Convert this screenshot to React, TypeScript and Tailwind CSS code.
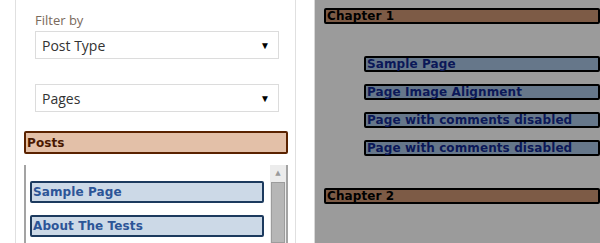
const chapterPages = [
  "Sample Page",
  "Page Image Alignment",
  "Page with comments disabled",
  "Page with comments disabled",
];

const posts = ["Sample Page", "About The Tests"];

const Select = ({ label }: { label: string }) => (
  <div className="flex h-[28px] w-[244px] items-center justify-between border border-[#dcdcdc] bg-white pl-[6px] pr-[8px] text-[14px] text-[#333] [font-family:'Open_Sans',sans-serif]">
    <span>{label}</span>
    <span className="text-[10px] text-black">▼</span>
  </div>
);

const App = () => {
  return (
    <main className="flex h-[243px] w-[600px] overflow-hidden bg-white [font-family:'DejaVu_Sans',Verdana,sans-serif]">
      <section className="ml-[15px] flex h-full w-[281px] flex-col border-x border-[#e0e0e0] px-[8px]">
        <div className="flex flex-col pl-[11px] pt-[11px]">
          <span className="text-[13px] leading-[18px] text-[#7a6a5c] [font-family:'Open_Sans',sans-serif]">
            Filter by
          </span>
          <div className="mt-[2px]">
            <Select label="Post Type" />
          </div>
          <div className="mt-[25px]">
            <Select label="Pages" />
          </div>
        </div>
        <div className="mt-[19px] flex h-[23px] w-[264px] items-center rounded-[2px] border-2 border-[#5a2200] bg-[#e3c0a8] pl-[1px] text-[12px] font-bold tracking-[0.1px] text-[#4a1800]">
          Posts
        </div>
        <div className="mt-[11px] flex w-[264px] flex-1 border-x-2 border-[#a3a3a3]">
          <div className="flex flex-1 flex-col gap-[12px] pl-[4px] pt-[16px]">
            {posts.map((p) => (
              <div
                key={p}
                className="flex h-[22px] w-[234px] items-center rounded-[2px] border-2 border-[#1c3a5e] bg-[#ccd9e7] pl-[1px] text-[12px] font-bold tracking-[0.1px] text-[#2c5597]"
              >
                {p}
              </div>
            ))}
          </div>
          <div className="flex w-[16px] flex-col bg-[#ececec]">
            <div className="flex h-[17px] items-center justify-center text-[7px] text-[#9a9a9a]">
              ▲
            </div>
            <div className="mx-[1px] flex-1 border border-[#9c9c9c] bg-[#b6b6b6]" />
          </div>
        </div>
      </section>
      <section className="ml-[18px] flex flex-1 flex-col border-l border-[#d8d8d8] bg-[#9b9b9b] pl-[9px] pt-[8px]">
        <div className="flex h-[16px] items-center rounded-[2px] border-2 border-black bg-[#7d5b46] pl-[1px] text-[12px] font-bold leading-[12px] tracking-[0.1px] text-black">
          Chapter 1
        </div>
        <div className="mt-[32px] flex flex-col gap-[12px] pl-[40px]">
          {chapterPages.map((p, i) => (
            <div
              key={i}
              className="flex h-[16px] items-center rounded-[2px] border-2 border-black bg-[#66778a] pl-[1px] text-[12px] font-bold leading-[12px] tracking-[0.1px] text-[#0b1858]"
            >
              {p}
            </div>
          ))}
        </div>
        <div className="mt-[32px] flex h-[16px] items-center rounded-[2px] border-2 border-black bg-[#7d5b46] pl-[1px] text-[12px] font-bold leading-[12px] tracking-[0.1px] text-black">
          Chapter 2
        </div>
      </section>
    </main>
  );
};

export default App;
